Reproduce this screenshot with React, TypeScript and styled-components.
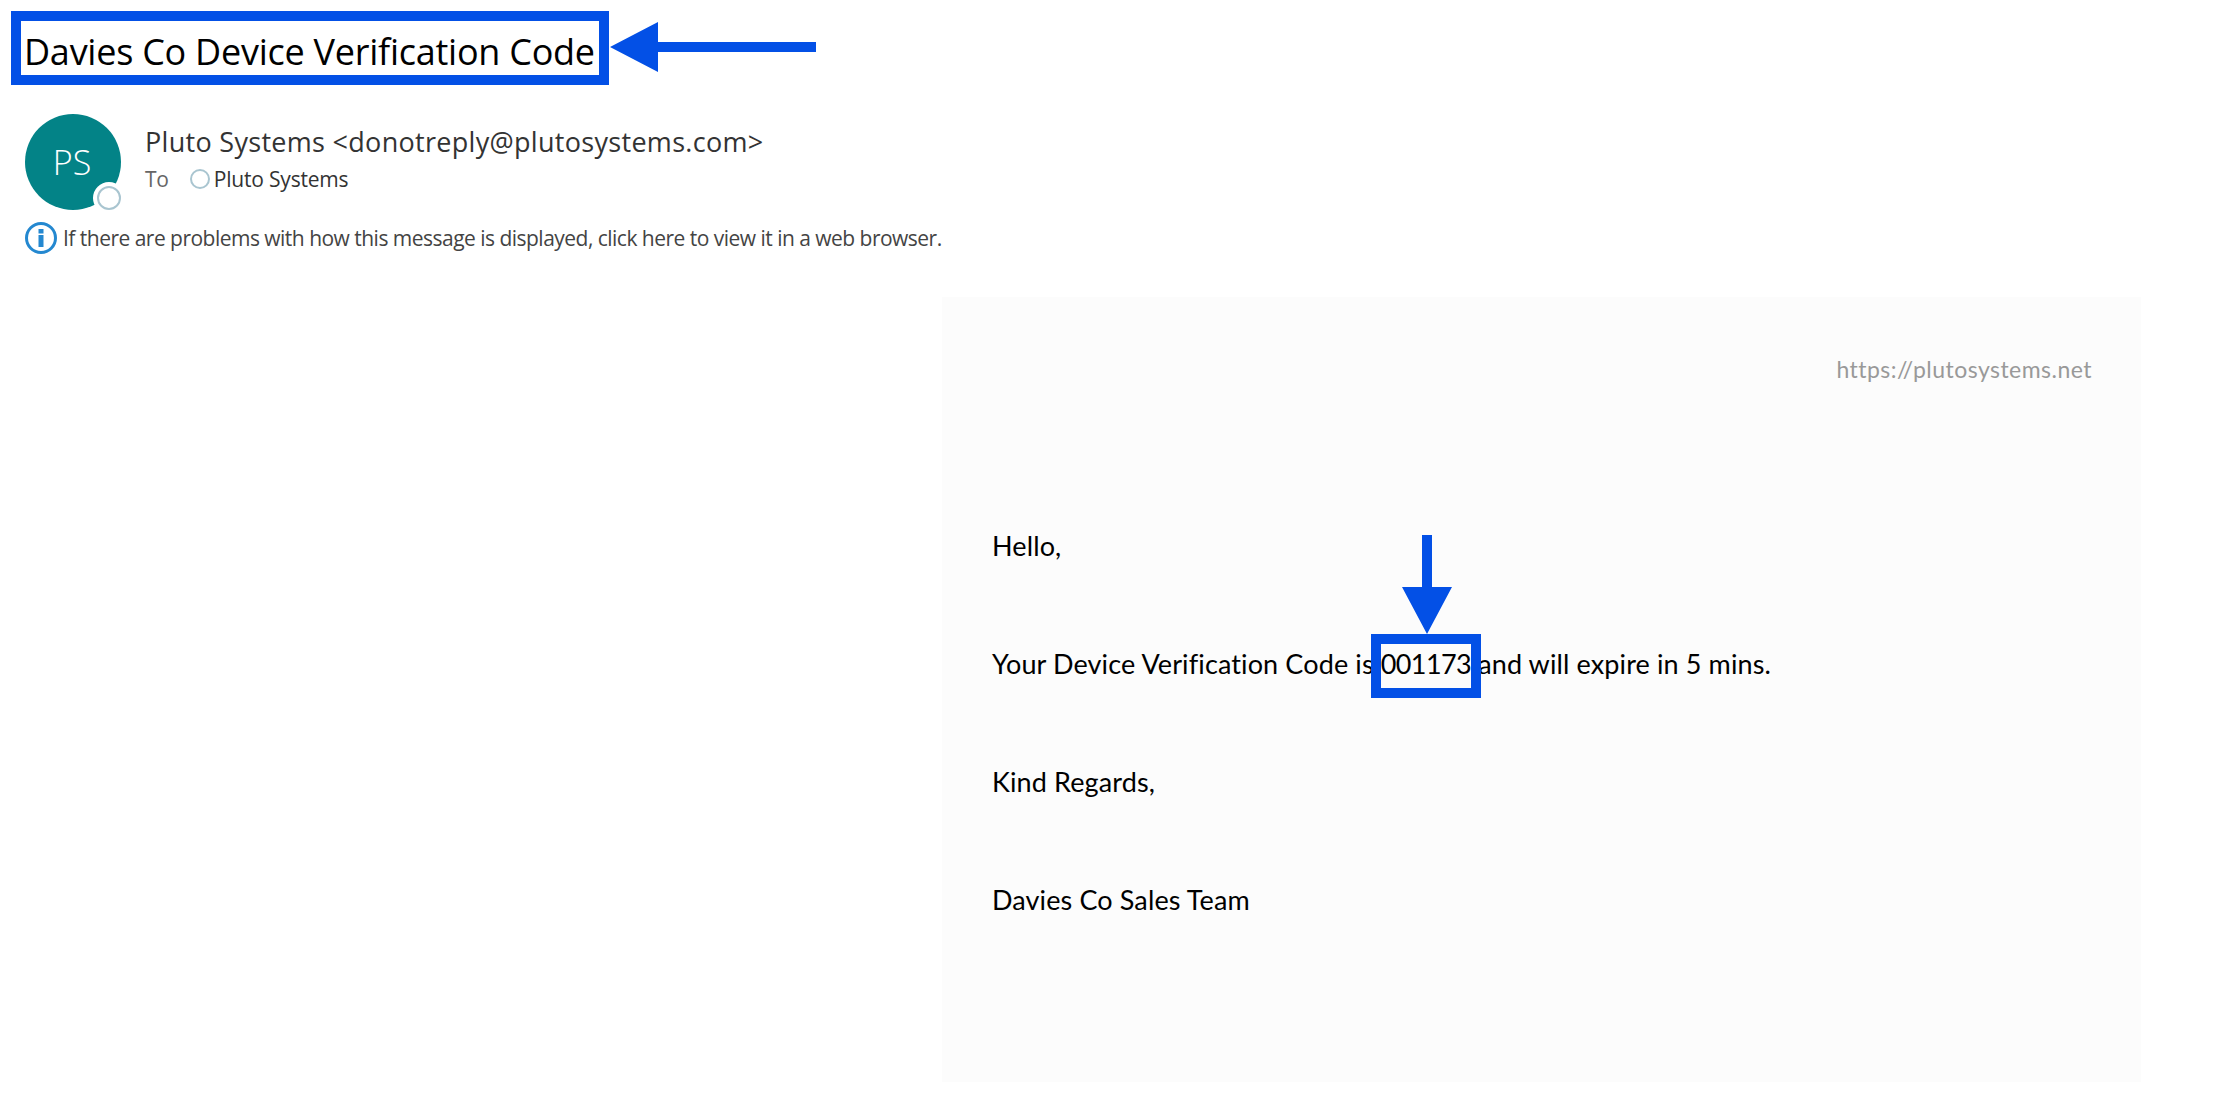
import React from "react";
import styled, { createGlobalStyle } from "styled-components";

const Global = createGlobalStyle`
  html, body { margin: 0; padding: 0; background: #fff; }
  body { font-family: "Open Sans", "Noto Sans", sans-serif; }
`;

const Page = styled.div`
  position: relative;
  width: 2217px;
  height: 1119px;
  overflow: hidden;
  padding: 11px 0 0 11px;
  box-sizing: border-box;
`;

const SubjectBox = styled.div`
  box-sizing: border-box;
  width: 598px;
  height: 74px;
  border: 10px solid #0350e6;
  display: flex;
  align-items: center;
  padding: 8px 0 0 3px;
`;

const Subject = styled.h1`
  margin: 0;
  font: 400 36px/1 "Open Sans", sans-serif;
  letter-spacing: -0.25px;
  color: #000;
  white-space: nowrap;
`;

const Header = styled.div`
  display: flex;
  gap: 24px;
  margin: 29px 0 0 14px;
`;

const Avatar = styled.div`
  position: relative;
  width: 96px;
  height: 96px;
  border-radius: 50%;
  background: #038387;
  color: #fff;
  display: flex;
  align-items: center;
  justify-content: center;
  padding-right: 2px;
  box-sizing: border-box;
  font: 300 34px/1 "Open Sans", sans-serif;
`;

const Presence = styled.span`
  position: absolute;
  right: 0;
  bottom: 0;
  width: 24px;
  height: 24px;
  box-sizing: border-box;
  background: #fff;
  border-radius: 50%;
  border: 2.5px solid #a9c5d0;
  box-shadow: 0 0 0 4px #fff;
`;

const Meta = styled.div`
  display: flex;
  flex-direction: column;
  padding-top: 10px;
`;

const Sender = styled.div`
  font: 400 27px/36px "Open Sans", sans-serif;
  letter-spacing: 0.3px;
  color: #333;
  white-space: nowrap;
`;

const Recipients = styled.div`
  display: flex;
  align-items: center;
  margin-top: 4px;
  font: 400 21px/30px "Open Sans", sans-serif;
  letter-spacing: -0.2px;
  color: #333;
`;

const ToLabel = styled.span`
  color: #666;
  margin-right: 21px;
`;

const RecipientDot = styled.span`
  width: 20px;
  height: 20px;
  box-sizing: border-box;
  border: 2px solid #a9c5d0;
  border-radius: 50%;
  margin-right: 4px;
`;

const Notice = styled.div`
  display: flex;
  align-items: center;
  gap: 6px;
  margin: 11px 0 0 14px;
  font: 400 21px/34px "Open Sans", sans-serif;
  letter-spacing: -0.52px;
  color: #444;
  white-space: nowrap;
`;

const Panel = styled.div`
  box-sizing: border-box;
  width: 1199px;
  height: 785px;
  margin: 42px 0 0 931px;
  background: #fcfcfc;
  padding: 56px 49px 0 50px;
`;

const SiteLink = styled.div`
  text-align: right;
  font: 400 23px/32px "Lato", sans-serif;
  letter-spacing: 0.47px;
  color: #999;
`;

const Line = styled.p`
  margin: 0;
  height: 118px;
  font: 400 27px/36px "Lato", sans-serif;
  letter-spacing: 0.12px;
  color: #000;
  white-space: nowrap;
`;

const Body = styled.div`
  margin-top: 143px;
`;

const Code = styled.span`
  position: relative;
  letter-spacing: -0.6px;
  &::after {
    content: "";
    position: absolute;
    left: -10px;
    right: -10px;
    top: -13px;
    bottom: -18px;
    border: 10px solid #0350e6;
  }
`;

const Arrow = styled.svg`
  position: absolute;
  display: block;
  fill: #0350e6;
`;

export default function App() {
  return (
    <Page>
      <Global />
      <SubjectBox>
        <Subject>Davies Co Device Verification Code</Subject>
      </SubjectBox>
      <Arrow style={{ left: 610, top: 22 }} width={206} height={50} viewBox="0 0 206 50">
        <path d="M0 25 L48 0 V20 H206 V30 H48 V50 Z" />
      </Arrow>
      <Header>
        <Avatar>
          PS
          <Presence />
        </Avatar>
        <Meta>
          <Sender>Pluto Systems &lt;donotreply@plutosystems.com&gt;</Sender>
          <Recipients>
            <ToLabel>To</ToLabel>
            <RecipientDot />
            Pluto Systems
          </Recipients>
        </Meta>
      </Header>
      <Notice>
        <svg width="32" height="32" viewBox="0 0 32 32">
          <circle cx="16" cy="16" r="14.5" fill="#fff" stroke="#2488d0" strokeWidth="3" />
          <rect x="13.5" y="13" width="5" height="12" fill="#2488d0" />
          <rect x="13.5" y="7" width="5" height="4.5" fill="#2488d0" />
        </svg>
        If there are problems with how this message is displayed, click here to view it in a web browser.
      </Notice>
      <Panel>
        <SiteLink>https://plutosystems.net</SiteLink>
        <Body>
          <Line>Hello,</Line>
          <Line>
            Your Device Verification Code is <Code>001173</Code> and will expire in 5 mins.
          </Line>
          <Line>Kind Regards,</Line>
          <Line>Davies Co Sales Team</Line>
        </Body>
      </Panel>
      <Arrow style={{ left: 1402, top: 535 }} width={50} height={99} viewBox="0 0 50 99">
        <path d="M20 0 H30 V52 H50 L25 99 L0 52 H20 Z" />
      </Arrow>
    </Page>
  );
}
